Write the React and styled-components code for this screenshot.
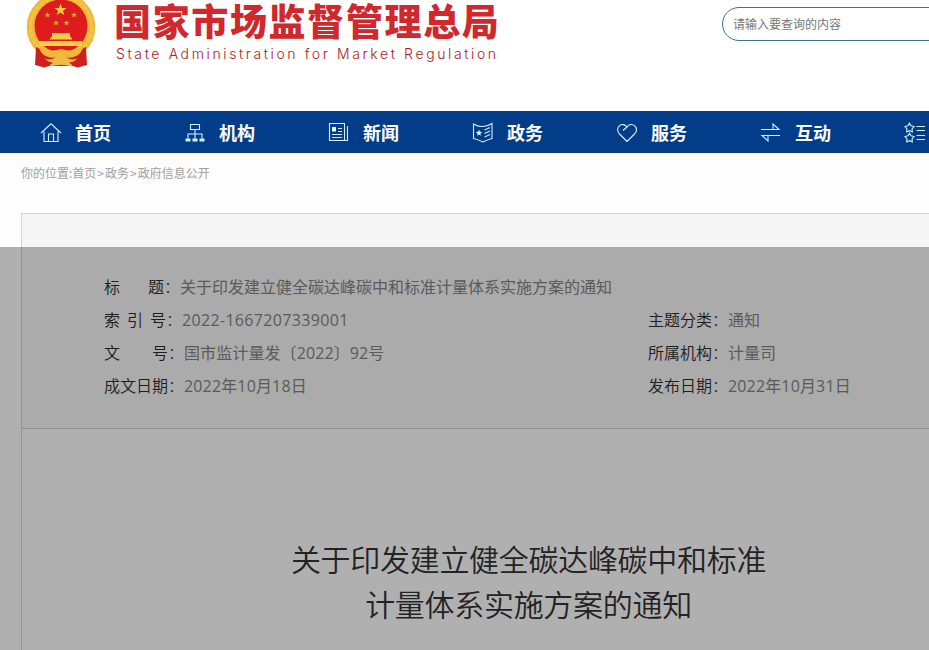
import React from 'react'
import styled, { createGlobalStyle } from 'styled-components'

const GlobalStyle = createGlobalStyle`
    * { box-sizing: border-box; }
    body {
        margin: 0;
        overflow: hidden;
        font-family: 'Open Sans', 'Noto Sans CJK SC', sans-serif;
    }
    h1, h2, p { margin: 0; font-weight: normal; }
`

const Page = styled.div`
    position: relative;
    height: 650px;
    overflow: hidden;
    background: #fdfdfd;
`

const Header = styled.header`
    display: flex;
    height: 111px;
    padding-left: 25px;
    background: #fff;
    overflow: hidden;
`

const Brand = styled.div`
    flex: none;
    width: 607px;
    padding-left: 17px;
`

const SiteName = styled.h1`
    height: 44px;
    line-height: 41px;
    font-family: 'Noto Sans CJK SC', sans-serif;
    font-size: 37px;
    font-weight: 900;
    letter-spacing: 1.65px;
    color: #d0282c;
    white-space: nowrap;
`

const EnglishName = styled.p`
    padding-left: 2px;
    line-height: 20px;
    font-family: Inter, 'Liberation Sans', sans-serif;
    font-size: 14px;
    font-weight: 300;
    letter-spacing: 2.62px;
    color: #ad2026;
    white-space: nowrap;
`

const Search = styled.div`
    flex: none;
    width: 300px;
    height: 34px;
    margin-top: 7px;
    margin-left: 18px;
    padding-left: 10px;
    border: 1px solid #3f6f91;
    border-radius: 17px;
    line-height: 32px;
    font-family: 'Noto Sans CJK SC', sans-serif;
    font-size: 12px;
    color: #777;
`

const Nav = styled.nav`
    display: flex;
    height: 42px;
    padding-left: 40px;
    background: #033d8a;
    overflow: hidden;
`

const NavItem = styled.a`
    display: flex;
    flex: none;
    align-items: center;
    gap: 13px;
    width: 144px;
    font-family: 'Noto Sans CJK SC', sans-serif;
    font-size: 18px;
    font-weight: 700;
    color: #fff;

    svg {
        width: 22px;
        height: 22px;
        margin-top: 1px;
        fill: none;
        stroke: #d3f0fb;
        stroke-width: 1.1;
    }
`

const Breadcrumb = styled.div`
    height: 60px;
    padding-left: 21px;
    line-height: 40px;
    font-family: 'Noto Sans CJK SC', sans-serif;
    font-size: 12px;
    color: #a0a0a0;
`

const Separator = styled.span`
    margin: 0 1px;
`

const Article = styled.main`
    width: 1015px;
    height: 500px;
    margin-left: 21px;
    border: 1px solid #d3d5d6;
`

const Info = styled.section`
    display: grid;
    grid-template-columns: 544px 1fr;
    grid-auto-rows: 33px;
    height: 215px;
    padding: 57px 0 0 82px;
    background: #f5f5f5;
    border-bottom: 1px solid #c9c9c9;
`

const Field = styled.div`
    display: flex;
    grid-column: ${props => props.$wide ? '1 / -1' : 'auto'};
    line-height: 33px;
    font-size: 16px;
    white-space: nowrap;
`

const Label = styled.span`
    display: flex;
    justify-content: space-between;
    width: ${props => props.$width || 64}px;
    font-weight: 350;
    color: #2c2c2c;
`

const Colon = styled.span`
    width: 16px;
    font-weight: 300;
    color: #444;
`

const Value = styled.span`
    letter-spacing: ${props => props.$spacing || 0}px;
    color: #838383;
`

const Heading = styled.h2`
    padding-top: 108px;
    line-height: 45px;
    font-size: 30px;
    font-weight: 350;
    letter-spacing: -0.3px;
    text-align: center;
    color: #333;
`

// dims everything below the breadcrumb
const Shade = styled.div`
    position: absolute;
    top: 247px;
    right: 0;
    bottom: 0;
    left: 0;
    background: rgba(0, 0, 0, 0.3);
`

const EmblemSvg = styled.svg`
    flex: none;
    width: 72px;
    height: 70px;
`

const starPoints = (cx, cy, r, inner = 0.4) => {
    const points = []
    for (let i = 0; i < 10; i++) {
        const radius = i % 2 ? r * inner : r
        const angle = Math.PI * (i / 5 - 0.5)
        points.push((cx + radius * Math.cos(angle)).toFixed(2) + ',' + (cy + radius * Math.sin(angle)).toFixed(2))
    }
    return points.join(' ')
}

const Emblem = () => (
    <EmblemSvg viewBox="0 0 72 70">
        <circle cx="36" cy="27" r="34.3" fill="#efb83a" />
        <circle cx="36" cy="27" r="30.5" fill="none" stroke="#f3c448" strokeWidth="3" strokeDasharray="5 1" />
        <circle cx="36" cy="26" r="26.5" fill="#df1c1d" />
        <polygon points={starPoints(35.5, 10, 6.5)} fill="#f6c93f" />
        <polygon points={starPoints(22.5, 15, 3.2)} fill="#f0a035" />
        <polygon points={starPoints(49, 15, 3.2)} fill="#f0a035" />
        <polygon points={starPoints(31, 23, 3.2)} fill="#f0a035" />
        <polygon points={starPoints(41.5, 23, 3.2)} fill="#f0a035" />
        <path d="M27 33 H45 V36 L47.5 39.5 H24.5 L27 36 Z M14 41 H57 V46 H14 Z" fill="#f6cf46" />
        <path d="M15 46 Q25 53 36 49 Q47 53 57 46 L58 52 Q49 61 36 57 Q23 61 14 52 Z" fill="#efb83a" />
        <path d="M11 47 Q15 48 16 52 Q22 60 36 57 Q50 60 56 52 Q57 48 61 47 L62 65 Q57 66 53 67.5 L48 66 H24 L19 67.5 Q15 66 10 65 Z" fill="#cf2020" />
        <path d="M20 58.5 Q27 61 31 57 L36 53.5 L41 57 Q45 61 52 58.5 Q50 62 44 62.5 Q48 65 47 66.5 Q36 63 25 66.5 Q24 65 28 62.5 Q22 62 20 58.5 Z" fill="#f0bd42" />
    </EmblemSvg>
)

const HomeIcon = () => (
    <svg viewBox="0 0 22 22"><path d="M1 11 L11 1.8 L21 11 M4 9.5 V19.5 H18 V9.5 M8.5 19.5 V12 H13.5 V19.5" /></svg>
)

const OrgIcon = () => (
    <svg viewBox="0 0 22 22">
        <path d="M6.5 2.5 H15.5 V7.5 H6.5 Z M11 7.5 V12 M4 16.5 V12 H18 V16.5 M11 12 V16.5" />
        <path d="M1.5 18 H6.5 M8.5 18 H13.5 M15.5 18 H20.5" strokeWidth="3" />
    </svg>
)

const NewsIcon = () => (
    <svg viewBox="0 0 22 22">
        <path d="M1.5 1.5 H16.5 V18.5 H1.5 Z M19.5 4 V18.5 H16.5 M10 6.5 H14 M10 9.5 H14 M4 12.5 H14 M4 15.5 H14" />
        <path d="M4 5 H8 V9.5 H4 Z" fill="#e3f8ff" stroke="none" />
    </svg>
)

const PolicyIcon = () => (
    <svg viewBox="0 0 22 22">
        <path d="M1.5 2 Q6 5 11 4.5 Q16 4 20 1.5 V16.5 Q16 17.5 11 20 Q6 17.5 1.5 16.5 Z M12.5 8 L18 5.5 M12.5 11.5 L18 9 M12.5 15 L18 12.5" />
        <polygon points={starPoints(7, 11, 3.5)} fill="#e3f8ff" stroke="none" />
    </svg>
)

const HeartIcon = () => (
    <svg viewBox="0 0 22 22">
        <path d="M11 19.5 L3.5 12 C1 9.5 1 6 3.3 3.9 C5.8 1.7 9 2.3 11 5 C13 2.2 16.5 1.7 18.7 3.9 C21 6.2 20.8 9.5 18.5 12 Z M7 8.5 L11 5" />
    </svg>
)

const ExchangeIcon = () => (
    <svg viewBox="0 0 22 22"><path d="M1 7.5 H19 L13 2 V7.5 M20 13.5 H2 L8 19 V13.5" /></svg>
)

const TopicsIcon = () => (
    <svg viewBox="0 0 22 22">
        <polygon points={starPoints(5.5, 6, 4.8, 0.55)} />
        <polygon points={starPoints(5.5, 16, 4.8, 0.55)} />
        <path d="M12.5 4.5 H21 M12.5 8.5 H21 M12.5 13.5 H21 M12.5 17.5 H21" />
    </svg>
)

const navItems = [
    { name: '首页', icon: <HomeIcon /> },
    { name: '机构', icon: <OrgIcon /> },
    { name: '新闻', icon: <NewsIcon /> },
    { name: '政务', icon: <PolicyIcon /> },
    { name: '服务', icon: <HeartIcon /> },
    { name: '互动', icon: <ExchangeIcon /> },
    { name: '', icon: <TopicsIcon /> },
]

const fields = [
    { label: ['标', '题'], labelWidth: 60, value: '关于印发建立健全碳达峰碳中和标准计量体系实施方案的通知', wide: true },
    { label: ['索', '引', '号'], labelWidth: 62, value: '2022-1667207339001', spacing: 0.33 },
    { label: ['主题分类'], value: '通知' },
    { label: ['文', '号'], value: '国市监计量发〔2022〕92号', spacing: 0.1 },
    { label: ['所属机构'], value: '计量司' },
    { label: ['成文日期'], value: '2022年10月18日', spacing: 0.15 },
    { label: ['发布日期'], value: '2022年10月31日', spacing: 0.15 },
]

const App = () => {
    const items = navItems.map((item, index) => (
        <NavItem key={index}>{item.icon}{item.name}</NavItem>
    ))

    const rows = fields.map(field => (
        <Field key={field.label.join('')} $wide={field.wide}>
            <Label $width={field.labelWidth}>
                {field.label.map(part => <span key={part}>{part}</span>)}
            </Label>
            <Colon>：</Colon>
            <Value $spacing={field.spacing}>{field.value}</Value>
        </Field>
    ))

    return (
        <Page>
            <GlobalStyle />
            <Header>
                <Emblem />
                <Brand>
                    <SiteName>国家市场监督管理总局</SiteName>
                    <EnglishName>State Administration for Market Regulation</EnglishName>
                </Brand>
                <Search>请输入要查询的内容</Search>
            </Header>
            <Nav>{items}</Nav>
            <Breadcrumb>
                你的位置:首页<Separator>&gt;</Separator>政务<Separator>&gt;</Separator>政府信息公开
            </Breadcrumb>
            <Article>
                <Info>{rows}</Info>
                <Heading>关于印发建立健全碳达峰碳中和标准<br />计量体系实施方案的通知</Heading>
            </Article>
            <Shade />
        </Page>
    )
}

export default App
